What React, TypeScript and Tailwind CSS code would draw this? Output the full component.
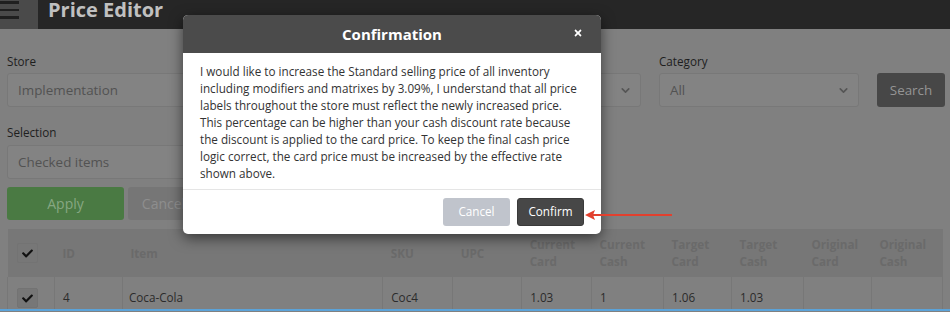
import React from 'react';
import { ChevronDown } from 'lucide-react';
import { FaCheck, FaTimes } from 'react-icons/fa';

const columns = [
  { label: '', w: 'w-[47px]' },
  { label: 'ID', w: 'w-[68px]' },
  { label: 'Item', w: 'w-[262px]' },
  { label: 'SKU', w: 'w-[70px]' },
  { label: 'UPC', w: 'w-[69px]' },
  { label: 'Current Card', w: 'w-[70px]' },
  { label: 'Current Cash', w: 'w-[72px]' },
  { label: 'Target Card', w: 'w-[68px]' },
  { label: 'Target Cash', w: 'w-[72px]' },
  { label: 'Original Card', w: 'w-[68px]' },
  { label: 'Original Cash', w: 'w-[71px]' },
];

const row = ['4', 'Coca-Cola', 'Coc4', '', '1.03', '1', '1.06', '1.03', '', ''];

const Select = ({ value }: { value: string }) => (
  <div className="h-[34px] rounded-[3px] border border-[#787878] bg-[#838383] flex items-center justify-between pl-[10px] pr-[8px] text-[13.4px] text-[#525252]">
    <span>{value}</span>
    <ChevronDown size={13} strokeWidth={3} className="text-[#555]" />
  </div>
);

const CheckBox = () => (
  <div className="w-[21px] h-[20px] rounded-[2px] bg-[#777] border border-[#737373] flex items-center justify-center">
    <FaCheck size={11} className="text-[#111]" />
  </div>
);

export default function App() {
  return (
    <div className="relative w-[950px] h-[312px] overflow-hidden flex flex-col bg-[#808080] font-['Open_Sans',sans-serif]">
      {/* top bar */}
      <header className="h-[29px] shrink-0 bg-[#262626] flex">
        <div className="w-[38px] bg-[#4a4a4a] flex flex-col gap-[5px] pt-[1px]">
          <div className="w-[19px] h-[2.5px] bg-[#1f1f1f]" />
          <div className="w-[19px] h-[2.5px] bg-[#1f1f1f]" />
          <div className="w-[19px] h-[2.5px] bg-[#1f1f1f]" />
        </div>
        <h1 className="ml-[10px] -mt-[5px] text-[20px] leading-[30px] font-bold text-[#c0c0c0]">Price Editor</h1>
      </header>

      <main className="flex-1 overflow-hidden px-[7px] pt-[24px]">
        <div className="flex items-end gap-[18px]">
          <div className="w-[416px] shrink-0">
            <label className="block text-[11.7px] leading-[17px] text-[#1e1e1e] mb-[3px]">Store</label>
            <Select value="Implementation" />
          </div>
          <div className="w-[200px] shrink-0">
            <label className="block text-[11.7px] leading-[17px] text-[#1e1e1e] mb-[3px]">Department</label>
            <Select value="All" />
          </div>
          <div className="w-[200px] shrink-0">
            <label className="block text-[11.7px] leading-[17px] text-[#1e1e1e] mb-[3px]">Category</label>
            <Select value="All" />
          </div>
          <button className="w-[68px] h-[34px] shrink-0 rounded-[3px] bg-[#474747] text-[13.4px] text-[#959595]">
            Search
          </button>
        </div>

        <div className="w-[416px] mt-[17px]">
          <label className="block text-[11.7px] leading-[17px] text-[#1e1e1e] mb-[4px]">Selection</label>
          <Select value="Checked items" />
        </div>

        <div className="flex gap-[4px] mt-[8px]">
          <button className="w-[117px] h-[33px] rounded-[3px] bg-[#4a7a43] text-[14px] text-[#86a782]">Apply</button>
          <button className="w-[71px] h-[33px] rounded-[3px] bg-[#767676] text-[14px] text-[#8e8e8e]">Cancel</button>
        </div>

        <table className="mt-[9px] border-collapse table-fixed text-[11.7px]">
          <thead>
            <tr className="bg-[#777] h-[48px]">
              {columns.map((c, i) => (
                <th key={i} className={`${c.w} px-[8px] text-left align-middle font-bold leading-[17px] text-[#6a6a6a]`}>
                  {i === 0 ? (
                    <div className="pl-[1px]">
                      <CheckBox />
                    </div>
                  ) : (
                    <span className="block w-[50px]">{c.label}</span>
                  )}
                </th>
              ))}
            </tr>
          </thead>
          <tbody>
            <tr className="h-[42px]">
              <td className="px-[8px] pl-[9px] border-l border-[#777]">
                <CheckBox />
              </td>
              {row.map((v, i) => (
                <td key={i} className={`${i === 1 ? 'px-[6px]' : 'px-[8px]'} border-x border-[#777] text-[#2b2b2b]`}>
                  {v}
                </td>
              ))}
            </tr>
          </tbody>
        </table>
      </main>
      <div className="h-[2px] shrink-0 bg-[#5ba3d9] mb-[1px]" />

      {/* confirmation dialog */}
      <div className="absolute left-[183px] top-[15px] w-[418px] rounded-[5px] bg-white shadow-[0_4px_14px_rgba(0,0,0,0.55)] overflow-hidden">
        <div className="relative h-[38px] bg-[#4b4b4b] flex items-center justify-center">
          <h2 className="text-[15px] font-bold text-white">Confirmation</h2>
          <button className="absolute right-[18px] top-[13px] text-white">
            <FaTimes size={10} />
          </button>
        </div>
        <p className="px-[17px] pt-[10px] pb-[7px] text-[11.7px] leading-[17px] text-[#333]">
          I would like to increase the Standard selling price of all inventory including modifiers and matrixes by
          3.09%, I understand that all price labels throughout the store must reflect the newly increased price. This
          percentage can be higher than your cash discount rate because the discount is applied to the card price. To
          keep the final cash price logic correct, the card price must be increased by the effective rate shown above.
        </p>
        <div className="border-t border-[#e5e5e5] flex justify-end gap-[7px] px-[17px] pt-[8px] pb-[8px]">
          <button className="w-[67px] h-[28px] rounded-[3px] bg-[#c0c4cc] text-[11.7px] text-white">Cancel</button>
          <button className="w-[67px] h-[28px] rounded-[3px] bg-[#474747] border border-[#3a3a3a] text-[11.7px] text-white">
            Confirm
          </button>
        </div>
      </div>

      {/* pointer arrow */}
      <svg className="absolute left-[584px] top-[209px]" width="90" height="12" viewBox="0 0 90 12">
        <line x1="6" y1="6" x2="88" y2="6" stroke="#e2402e" strokeWidth="2" />
        <path d="M1 6 L11 1 L9 6 L11 11 Z" fill="#e2402e" />
      </svg>
    </div>
  );
}
